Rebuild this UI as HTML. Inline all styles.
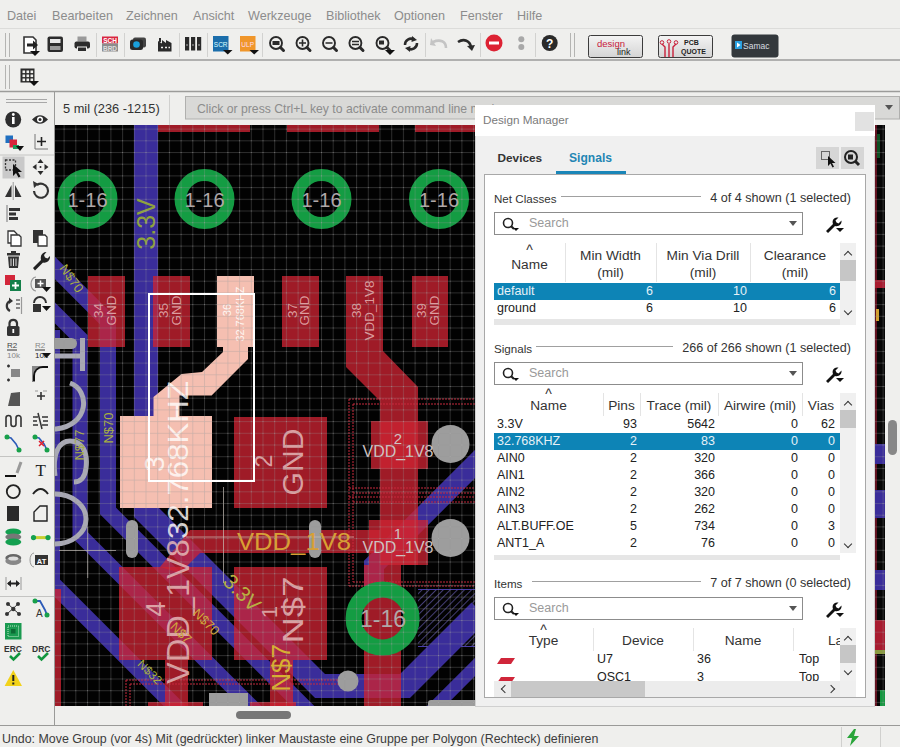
<!DOCTYPE html>
<html><head><meta charset="utf-8">
<style>
*{margin:0;padding:0;box-sizing:border-box}
html,body{width:900px;height:747px;overflow:hidden;background:#efefed;font-family:"Liberation Sans",sans-serif;color:#333}
.a{position:absolute}
.menu span{position:absolute;top:9px;font-size:12.6px;color:#8c8c8c}
.hl{position:absolute;height:1px;background:#bdbdbb}
.vl{position:absolute;width:1px;background:#cfcfcd}
#dlg{position:absolute;left:474px;top:104px;width:401px;height:603px;background:#efefef;border:1px solid #c8c8c8}
.t{font-size:12.6px;color:#333;white-space:nowrap;line-height:15px}
.sb{position:absolute;background:#fff;border:1px solid #8c8c8c}
.ph{position:absolute;font-size:12.5px;color:#9a9a9a}
.row{position:absolute;left:0;height:17px;font-size:12.5px;color:#222;white-space:nowrap}
.row span{position:absolute;top:1px}
.sel{background:#0d84b6;color:#e6f1f6}
.hd{position:absolute;font-size:13.7px;color:#333;text-align:center;line-height:17px;white-space:nowrap}
.arr{position:absolute;width:8px;height:8px}
.arr:before{content:"";position:absolute;left:1px;top:1px;width:5px;height:5px;border-left:1.6px solid #333;border-top:1.6px solid #333}
.up:before{transform:translate(0,2px) rotate(45deg)}
.dn:before{transform:translate(0,-1px) rotate(225deg)}
.lf:before{transform:translate(2px,0) rotate(-45deg)}
.rt:before{transform:translate(-1px,0) rotate(135deg)}
</style></head><body>
<!-- menu -->
<div class="menu">
<span style="left:7px">Datei</span>
<span style="left:52px">Bearbeiten</span>
<span style="left:126px">Zeichnen</span>
<span style="left:193px">Ansicht</span>
<span style="left:248px">Werkzeuge</span>
<span style="left:326px">Bibliothek</span>
<span style="left:394px">Optionen</span>
<span style="left:460px">Fenster</span>
<span style="left:517px">Hilfe</span>
</div>
<svg class="a" style="left:0;top:0" width="900" height="125" viewBox="0 0 900 125">
<path d="M0,28.5 H900" stroke="#dcdcda" stroke-width="1"/>
<path d="M0,60 H900 M0,91.5 H900" stroke="#9c9c9a" stroke-width="1.4"/>
<!-- grips -->
<path d="M5.5,33 V57 M9.5,33 V57 M5.5,65 V89 M9.5,65 V89 M570.5,33 V57 M574.5,33 V57" stroke="#b4b4b2" stroke-width="1"/>
<!-- separators -->
<path d="M96.5,33 V57 M124.5,33 V57 M179.5,33 V57 M207.5,33 V57 M262.5,33 V57 M425.5,33 V57 M480.5,33 V57 M535.5,33 V57" stroke="#d2d2d0" stroke-width="1"/>
<!-- export -->
<path d="M24,37 H33 L36,40 V53 H24 Z" fill="#fff" stroke="#333" stroke-width="1.6"/>
<path d="M27,43.5 H33 V40.5 L38,45 L33,49.5 V46.5 H27 Z" fill="#222"/>
<path d="M30,51 H40 L35,56 Z" fill="#111"/>
<!-- save -->
<rect x="47.5" y="36.5" width="15.5" height="15.5" rx="2" fill="#2c2c2c"/>
<rect x="50" y="39" width="10.5" height="4" fill="#e8e8e8"/><rect x="50" y="46" width="10.5" height="4" fill="#9a9a9a"/>
<!-- print -->
<rect x="77.5" y="36.5" width="9" height="5" fill="#9a9a9a"/>
<rect x="74.5" y="41.5" width="15.5" height="7" rx="2" fill="#2c2c2c"/>
<rect x="77.5" y="47" width="9" height="4.5" fill="#2c2c2c" stroke="#efefed" stroke-width="1"/>
<!-- SCH BRD -->
<rect x="102" y="36.5" width="16" height="7" fill="#d92640"/><rect x="102" y="43.5" width="16" height="8" fill="#8c8c8c"/>
<text x="110" y="42.8" font-family="Liberation Sans" font-size="6.5" font-weight="bold" fill="#fff" text-anchor="middle">SCH</text>
<text x="110" y="50.5" font-family="Liberation Sans" font-size="6.5" font-weight="bold" fill="#ddd" text-anchor="middle">BRD</text>
<!-- camera -->
<rect x="133" y="37.5" width="13" height="10" rx="2" fill="#444"/>
<rect x="130" y="39.5" width="13" height="10.5" rx="2.5" fill="#2a2a2a"/><circle cx="136.5" cy="44.5" r="3.3" fill="#1aa0dc"/>
<!-- factory -->
<path d="M158,51.5 V41 L162,43.5 V40 L166,43 V40 L171.5,43 V51.5 Z" fill="#2a2a2a"/><rect x="159" y="38" width="2" height="4" fill="#2a2a2a"/>
<path d="M161,47.5 H163 M165,47.5 H167 M168.5,47.5 H170" stroke="#efefed" stroke-width="1.5"/>
<!-- library -->
<rect x="185" y="37" width="4.2" height="13.5" fill="#2a2a2a"/><rect x="191" y="37" width="4.2" height="13.5" fill="#2a2a2a"/><rect x="197" y="37" width="4.2" height="13.5" fill="#2a2a2a"/>
<path d="M186,45 H188 M192,45 H194 M198,45 H200" stroke="#aaa" stroke-width="1"/>
<!-- SCR ULP -->
<rect x="213" y="36" width="15.5" height="15.5" fill="#1b6eab"/><text x="220.7" y="46.5" font-family="Liberation Sans" font-size="6.5" fill="#dff" text-anchor="middle">SCR</text>
<path d="M223,50 H232.5 L227.7,54.5 Z" fill="#111"/>
<rect x="240" y="36" width="15.5" height="15.5" fill="#f0962a"/><text x="247.7" y="46.5" font-family="Liberation Sans" font-size="6.5" fill="#fde" text-anchor="middle">ULP</text>
<path d="M249.5,50 H259 L254.2,54.5 Z" fill="#111"/>
<!-- zooms -->
<g fill="none" stroke="#2a2a2a" stroke-width="1.9">
<circle cx="276" cy="43" r="6"/><circle cx="302.5" cy="43" r="6"/><circle cx="329" cy="43" r="6"/><circle cx="355.4" cy="43" r="6"/><circle cx="382.5" cy="43" r="6"/>
</g>
<g stroke="#2a2a2a" stroke-width="3" stroke-linecap="round">
<path d="M280.5,47.5 L283.5,50.5 M307,47.5 L310,50.5 M333.5,47.5 L336.5,50.5 M360,47.5 L363,50.5 M387,47.5 L390,50.5"/>
</g>
<rect x="272.5" y="41" width="7" height="4" fill="#2a2a2a"/>
<path d="M299,43 H306 M302.5,39.5 V46.5 M325.5,43 H332.5 M352,41.5 H359 M352,44.5 H359" stroke="#2a2a2a" stroke-width="1.6"/>
<rect x="379" y="40.5" width="5" height="4" fill="#2a2a2a"/>
<path d="M385,50 H395 L390,55 Z" fill="#111"/>
<path d="M405,45 A6,6 0 0 1 414,39.5 M417,43 A6,6 0 0 1 408,48.5" fill="none" stroke="#2a2a2a" stroke-width="2.5"/>
<path d="M412,36 L417,40 L411.5,42 Z M410,52 L405,48 L410.5,46 Z" fill="#2a2a2a"/>
<!-- undo redo -->
<path d="M446,48 C446,41 440,39 433,42" fill="none" stroke="#c4c4c4" stroke-width="2.6"/><path d="M431,38 L436,46 L430,45 Z" fill="#c4c4c4"/>
<path d="M458,42 C464,38 470,41 471,47" fill="none" stroke="#2a2a2a" stroke-width="2.6"/><path d="M467,46 L475,45 L472,51 Z" fill="#2a2a2a"/>
<!-- stop / go -->
<circle cx="494" cy="43" r="8.5" fill="#dd2233"/><rect x="489" y="41.5" width="10" height="3" fill="#fff"/>
<circle cx="521.3" cy="39.3" r="3" fill="#a8a8a8"/><circle cx="521.3" cy="47" r="3" fill="#a8a8a8"/>
<!-- help -->
<circle cx="549.7" cy="43" r="8" fill="#2a2a2a"/>
<text x="549.7" y="47.5" font-family="Liberation Sans" font-size="12" font-weight="bold" fill="#fff" text-anchor="middle">?</text>
<!-- buttons -->
<defs><linearGradient id="bg" x1="0" y1="0" x2="0" y2="1"><stop offset="0" stop-color="#f4f4f4"/><stop offset="1" stop-color="#d4d4d4"/></linearGradient></defs>
<rect x="588.5" y="35.5" width="54" height="22" rx="2" fill="url(#bg)" stroke="#3c3c3c" stroke-width="1"/>
<text x="597" y="47" font-family="Liberation Sans" font-size="9.5" fill="#c8203a">design</text>
<text x="617" y="55" font-family="Liberation Sans" font-size="9" fill="#222">link</text>
<rect x="658.5" y="35.5" width="54" height="22" rx="2" fill="url(#bg)" stroke="#3c3c3c" stroke-width="1"/>
<path d="M665,57 V47 L662,44 M669,57 V44 M673,57 V47 L676,44" fill="none" stroke="#c8203a" stroke-width="1.4"/>
<circle cx="662" cy="42.5" r="1.8" fill="none" stroke="#c8203a"/><circle cx="669" cy="41.5" r="1.8" fill="none" stroke="#c8203a"/><circle cx="676" cy="42.5" r="1.8" fill="none" stroke="#c8203a"/>
<text x="684" y="45" font-family="Liberation Sans" font-size="7" font-weight="bold" fill="#222">PCB</text>
<text x="681" y="54" font-family="Liberation Sans" font-size="7" font-weight="bold" fill="#222">QUOTE</text>
<rect x="731.5" y="34.5" width="47" height="23" rx="3" fill="#33383c"/>
<rect x="735" y="41" width="7" height="8" fill="#2aa0e0"/><path d="M737,42.5 L740.5,45 L737,47.5 Z" fill="#fff"/>
<text x="743" y="48.5" font-family="Liberation Sans" font-size="8.5" fill="#d8dde0">Samac</text>
<!-- grid -->
<g fill="#2a2a2a"><rect x="20.5" y="68.5" width="14" height="14"/></g>
<g fill="#efefed"><rect x="22.5" y="70.5" width="2.6" height="2.6"/><rect x="26.5" y="70.5" width="2.6" height="2.6"/><rect x="30.5" y="70.5" width="2.6" height="2.6"/>
<rect x="22.5" y="74.5" width="2.6" height="2.6"/><rect x="26.5" y="74.5" width="2.6" height="2.6"/><rect x="30.5" y="74.5" width="2.6" height="2.6"/>
<rect x="22.5" y="78.5" width="2.6" height="2.6"/><rect x="26.5" y="78.5" width="2.6" height="2.6"/><rect x="30.5" y="78.5" width="2.6" height="2.6"/></g>
<path d="M29,81 H39 L34,86 Z" fill="#111"/>
<!-- command row -->
<path d="M169.5,95 V125" stroke="#d0d0ce" stroke-width="1"/>
<rect x="185.5" y="96.5" width="714" height="22.5" fill="#d9d9d7" stroke="#b0b0ae" stroke-width="1"/>
<path d="M885,105 H893 L889,110 Z" fill="#555"/>
<text x="63" y="113" font-family="Liberation Sans" font-size="12.8" fill="#333">5 mil (236 -1215)</text>
<text x="197" y="113" font-family="Liberation Sans" font-size="12.2" fill="#8c8c8c">Click or press Ctrl+L key to activate command line mode</text>
</svg>

<svg class="a" style="left:0;top:92px" width="54" height="614" viewBox="0 92 54 614">
<g stroke="#a8a8a8" stroke-width="1"><path d="M6,99.5 H47 M6,102.5 H47"/></g>
<path d="M0,155 H54 M0,456.5 H54 M0,596.5 H54" stroke="#c4c4c2" stroke-width="1"/>
<!-- info / eye -->
<circle cx="13.2" cy="119.5" r="8" fill="#2e2e2e"/>
<rect x="12" y="117" width="2.6" height="7" fill="#fff"/><circle cx="13.3" cy="114.5" r="1.4" fill="#fff"/>
<path d="M32,119.5 Q40,111 48,119.5 Q40,128 32,119.5 Z" fill="#2e2e2e"/><circle cx="40" cy="119.5" r="3" fill="#fff"/><circle cx="40" cy="119.5" r="1.5" fill="#2e2e2e"/>
<!-- layers / coord -->
<rect x="5.5" y="135.5" width="7.5" height="7.5" fill="#1f6fc0"/>
<rect x="9.5" y="139.5" width="7.5" height="8" fill="#d8283c"/>
<rect x="13" y="145" width="6" height="4" fill="#1e9a5a"/>
<path d="M16,146 H24 L20,151 Z" fill="#111"/>
<path d="M35,134 V149 H48" stroke="#777" stroke-width="1" fill="none"/><path d="M37,141.5 H46 M41.5,137 V146" stroke="#222" stroke-width="1.6"/>
<!-- select / move -->
<rect x="2.5" y="156.5" width="22" height="22" fill="#c9c9c9"/>
<rect x="5.5" y="160" width="10" height="10" fill="none" stroke="#333" stroke-width="1.3" stroke-dasharray="2 1.5"/>
<path d="M13,164 L13,176 L16,173 L18.5,177.5 L20.5,176.5 L18,172 L22,172 Z" fill="#111"/>
<path d="M40.5,159 L43.5,163 H37.5 Z M40.5,175 L43.5,171 H37.5 Z M32.5,167 L36.5,164 V170 Z M48.5,167 L44.5,164 V170 Z" fill="#2a2a2a"/>
<circle cx="40.5" cy="167" r="1" fill="#2a2a2a"/>
<!-- mirror / rotate -->
<path d="M11.5,185 L5,197 H11.5 Z M15,185 L21.5,197 H15 Z" fill="#333"/><path d="M13.2,182 V200" stroke="#999" stroke-width="1"/>
<path d="M34,191 A7,7 0 1 0 37,185" fill="none" stroke="#333" stroke-width="2.2"/><path d="M33,181 L38.5,184 L34,188 Z" fill="#333"/>
<!-- align -->
<path d="M7,205 V222" stroke="#999" stroke-width="1.4"/><rect x="9" y="208" width="11" height="3" fill="#333"/><rect x="9" y="212.5" width="7" height="3" fill="#333"/><rect x="9" y="217" width="9" height="3" fill="#333"/>
<!-- copy / paste -->
<path d="M8,231 H14 L17,234 V243 H8 Z" fill="#fff" stroke="#333" stroke-width="1.3"/><path d="M11,235 H19 L21,237 V246 H11 Z" fill="#fff" stroke="#333" stroke-width="1.3"/>
<rect x="33" y="230" width="10" height="13" fill="#333"/><path d="M38,235 H45 L47,237 V246 H38 Z" fill="#fff" stroke="#333" stroke-width="1.3"/>
<!-- delete / wrench -->
<rect x="7" y="253" width="13" height="2.5" fill="#333"/><rect x="11" y="251" width="5" height="2" fill="#333"/><path d="M8,256.5 H19 L18,268 H9 Z" fill="#333"/><path d="M11,258.5 V266 M13.5,258.5 V266 M16,258.5 V266" stroke="#ddd" stroke-width="1"/>
<path d="M33,268 L41,260 C40,256 42,252 46.5,252 L44,255 L45,257.5 L47.5,258.5 L50,256 C50.5,261 46,263.5 43,262.5 L35,270.5 Z" fill="#222"/>
<!-- add / replace -->
<rect x="5" y="275" width="10" height="10" fill="#d3263a"/><rect x="10" y="280" width="11" height="11" fill="#14804a"/><path d="M15.5,282 V289 M12,285.5 H19" stroke="#fff" stroke-width="1.8"/>
<path d="M36,277 A5,7 0 0 0 36,291" fill="none" stroke="#999" stroke-width="1.2"/><rect x="35" y="279" width="11" height="9" fill="#555"/><path d="M40.5,280.5 V286.5 M37.5,283.5 H43.5" stroke="#fff" stroke-width="1.5"/><path d="M42,287 H51 L46.5,292 Z" fill="#111"/>
<!-- change / optimize -->
<path d="M10,301 A5.5,5.5 0 0 0 10,311" fill="none" stroke="#333" stroke-width="2.2"/><path d="M9,297.5 L13,301 L9,304 Z" fill="#333"/><path d="M16,300 H20 M16,304 H20 M16,308 H20" stroke="#666" stroke-width="1.5"/><path d="M21.5,297 V314" stroke="#999" stroke-width="1.2"/>
<path d="M34,303 A6,6 0 0 1 46,303" fill="none" stroke="#333" stroke-width="2"/><rect x="33" y="304" width="8" height="8" fill="#333"/><path d="M42,306 H51 L46.5,311 Z" fill="#111"/>
<!-- lock -->
<path d="M9.5,326 V323 A3.8,3.8 0 0 1 17,323 V326" fill="none" stroke="#333" stroke-width="2.2"/><rect x="7" y="326" width="12.5" height="10" rx="1.5" fill="#333"/><rect x="12.4" y="329" width="1.8" height="4" fill="#fff"/>
<!-- R2 10k -->
<g font-family="Liberation Sans" font-size="8" fill="#444"><text x="7" y="348">R2</text><text x="7" y="358" fill="#888">10k</text><text x="35" y="348" fill="#888">R2</text><text x="35" y="358" fill="#222">10k</text></g>
<path d="M7,350 H17 M35,350 H45" stroke="#333" stroke-width="1"/><path d="M42,353 H51 L46.5,358 Z" fill="#111"/>
<!-- split / miter -->
<path d="M7,366 H10 M8.5,364.5 V367.5 M7,380 H10 M8.5,378.5 V381.5" stroke="#333" stroke-width="1.4"/><rect x="11" y="369" width="9" height="8" fill="#888"/>
<rect x="32" y="366" width="16" height="16" fill="#888"/><path d="M34,381 V376 A9,9 0 0 1 43,367 H48" fill="none" stroke="#111" stroke-width="2"/><path d="M35,382 V376 A8,8 0 0 1 43,368 H48 V382 Z" fill="#efefed"/>
<!-- slant / + -->
<path d="M8,406 L11,393 L20,392 V406 Z" fill="#555"/>
<path d="M37,396 H45 M41,392 V400" stroke="#333" stroke-width="1.6"/><path d="M35,391 H38 M43,391 H47" stroke="#999" stroke-width="1"/>
<!-- meander / ripup -->
<path d="M6,427 V418 A2.5,2.5 0 0 1 11,418 V424 A2.5,2.5 0 0 0 16,424 V418 A2.5,2.5 0 0 1 21,418 V427" fill="none" stroke="#333" stroke-width="1.6"/>
<path d="M33,417 H38 M33,421 H37 M33,425 H38 M42,417 H48 M43,421 H48 M42,425 H48 M38,413 L42,429" stroke="#333" stroke-width="1.5"/>
<!-- route / unroute -->
<path d="M6,437 L11,438 L16,444 L19,450" fill="none" stroke="#2c5bb8" stroke-width="1.6"/><circle cx="7" cy="437" r="2.5" fill="#18a04a"/><circle cx="19" cy="450" r="2.5" fill="#18a04a"/>
<path d="M34,437 L39,438 L44,444 L47,450" fill="none" stroke="#2c5bb8" stroke-width="1.6"/><circle cx="35" cy="437" r="2.5" fill="#18a04a"/><circle cx="47" cy="450" r="2.5" fill="#18a04a"/><path d="M39,441 L44,446 M44,441 L39,446" stroke="#e02030" stroke-width="1.5"/>
<!-- line / T -->
<path d="M5,476 H16" stroke="#111" stroke-width="2"/><path d="M17,473 L21,462" stroke="#999" stroke-width="3"/>
<text x="40.7" y="476" font-family="Liberation Serif" font-size="17" text-anchor="middle" fill="#222">T</text>
<!-- circle / arc -->
<circle cx="13.3" cy="491.6" r="6.5" fill="none" stroke="#222" stroke-width="1.8"/>
<path d="M33,494 Q40.7,484 48,494" fill="none" stroke="#222" stroke-width="2"/>
<!-- rect / polygon -->
<rect x="7" y="506" width="12" height="15" fill="#2a2a2a"/>
<path d="M34,521 V512 L40,506 H47 V521 Z" fill="none" stroke="#222" stroke-width="1.4"/>
<!-- via / signal -->
<ellipse cx="13.3" cy="532" rx="8" ry="3.5" fill="#14a050"/><ellipse cx="13.3" cy="537" rx="8" ry="3.5" fill="#777"/><ellipse cx="13.3" cy="542" rx="8" ry="3.5" fill="#14a050"/>
<path d="M33,537.6 H48" stroke="#c8d030" stroke-width="3"/><circle cx="33.5" cy="537.6" r="2.6" fill="#14a050"/><circle cx="48" cy="537.6" r="2.6" fill="#14a050"/>
<!-- hole / attribute -->
<ellipse cx="13.3" cy="558" rx="8" ry="4" fill="#666"/><ellipse cx="13.3" cy="561" rx="8" ry="4" fill="#888"/><ellipse cx="13.3" cy="558.5" rx="5" ry="2" fill="#ddd"/>
<path d="M34,553 A4,7 0 0 0 34,567" fill="none" stroke="#999" stroke-width="1"/><rect x="35" y="555" width="13" height="10" fill="#333"/><text x="41.5" y="563.5" font-family="Liberation Sans" font-size="7.5" font-weight="bold" text-anchor="middle" fill="#fff">AT</text>
<!-- dimension -->
<path d="M6,577 V590 M21,577 V590" stroke="#999" stroke-width="1"/><path d="M8,583.5 H19" stroke="#222" stroke-width="2"/><path d="M7,583.5 L11,580 V587 Z M20,583.5 L16,580 V587 Z" fill="#222"/>
<!-- ratsnest / autorouter -->
<g fill="#333"><circle cx="8" cy="604" r="2"/><circle cx="18" cy="604" r="2"/><circle cx="13.3" cy="609" r="2.2"/><circle cx="7" cy="614" r="2"/><circle cx="19" cy="614" r="2"/></g>
<path d="M8,604 L19,614 M18,604 L7,614" stroke="#333" stroke-width="1"/>
<path d="M35,601 L40,601 L45,610 L47,615" fill="none" stroke="#2c5bb8" stroke-width="1.8"/><circle cx="35" cy="601" r="2.5" fill="#18a04a"/><circle cx="47" cy="615" r="2.5" fill="#18a04a"/>
<text x="36" y="617" font-family="Liberation Sans" font-size="10" fill="#333">A</text>
<!-- green chip -->
<rect x="5" y="623" width="16.5" height="16.5" fill="#1a9a50"/><rect x="8" y="626" width="10.5" height="10.5" fill="none" stroke="#bfe8c8" stroke-width="1" stroke-dasharray="1 1"/><rect x="11" y="629" width="4.5" height="4.5" fill="#0c6a34"/>
<!-- ERC / DRC -->
<g font-family="Liberation Sans" font-size="8.5" font-weight="bold" fill="#333"><text x="4" y="652">ERC</text><text x="32" y="652">DRC</text></g>
<path d="M10,656 L13.5,659.5 L20,653" fill="none" stroke="#12963e" stroke-width="2.6"/><path d="M38,656 L41.5,659.5 L48,653" fill="none" stroke="#12963e" stroke-width="2.6"/>
<!-- warning -->
<path d="M13.3,670 L22,686 H4.6 Z" fill="#f2d21a"/><rect x="12.3" y="675" width="2" height="6" fill="#222"/><rect x="12.3" y="682.5" width="2" height="2" fill="#222"/>
</svg>

<div class="a" style="left:54px;top:92px;width:1px;height:633px;background:#9a9a98"></div>
<svg class="a" style="left:0;top:0" width="900" height="747" viewBox="0 0 900 747" font-family="Liberation Sans">
<defs>
<clipPath id="cv"><rect x="55" y="125" width="830" height="581"/></clipPath>
<pattern id="grid" patternUnits="userSpaceOnUse" x="63.6" y="140.3" width="11.7" height="11.7">
<rect x="0" y="0" width="11.7" height="1" fill="#959595" fill-opacity="0.29"/>
<rect x="0" y="0" width="1" height="11.7" fill="#959595" fill-opacity="0.29"/>
<rect x="0" y="0" width="1" height="1" fill="#ccc" fill-opacity="0.3"/>
</pattern>
<pattern id="hatch" patternUnits="userSpaceOnUse" width="5" height="5" patternTransform="rotate(45)">
<rect x="0" y="0" width="1" height="5" fill="#6f66c0" fill-opacity="0.6"/>
</pattern>
</defs>
<g clip-path="url(#cv)">
<rect x="55" y="124" width="830" height="582" fill="#020202"/>
<rect x="418" y="589" width="60" height="58" fill="url(#hatch)"/>
<path d="M418,589.5 H480 M418,646.5 H480" stroke="#4a3fa8" stroke-width="1"/>
<!-- BLUE bottom layer -->
<g fill="none" stroke="#3a2d9a" stroke-linejoin="miter" stroke-linecap="butt">
<polyline points="146,124 146,512 320,686 405,686 480,611" stroke-width="24"/>
<polyline points="40,253 108,321 108,511 320,723" stroke-width="16"/>
<polyline points="40,298 80,338 80,535 260,715" stroke-width="15"/>
<polyline points="52,330 52,583 180,711" stroke-width="16"/>
<polyline points="374,590 374,565 485,454" stroke-width="20"/>
<polyline points="430,712 490,652" stroke-width="13"/>
</g>
<!-- RED top layer -->
<g fill="#cc2232" fill-opacity="0.78">
<rect x="158" y="124" width="92" height="8"/>
<rect x="287" y="124" width="92" height="8"/>
<rect x="415" y="124" width="70" height="8"/>
<rect x="88" y="276" width="37" height="71"/>
<rect x="153" y="276" width="37" height="71"/>
<rect x="282" y="276" width="37" height="71"/>
<path d="M346,276 H383 V351 L418,387 V565 H380 V401 L346,367 Z"/>
<rect x="412" y="276" width="36" height="71"/>
<rect x="234" y="417" width="93" height="91"/>
<rect x="234" y="567" width="93" height="93"/>
<rect x="119" y="567" width="93" height="93"/>
<rect x="371" y="421" width="57" height="48"/>
<rect x="369" y="520" width="59" height="45"/>
<path d="M190,530 H380 V553 H200 L180,573 L160,567 Z"/>
<rect x="364" y="565" width="37" height="141"/>
<rect x="165" y="660" width="23" height="46"/>
<rect x="270" y="660" width="23" height="46"/>
<rect x="148" y="702" width="55" height="4"/>
<rect x="250" y="702" width="46" height="4"/>
<rect x="55" y="589" width="6" height="117"/>
</g>
<!-- right strip -->
<rect x="875" y="124" width="10" height="582" fill="#060606"/>
<rect x="875" y="124" width="2" height="582" fill="#8a1a2e" fill-opacity="0.7"/>
<rect x="877" y="134" width="3" height="24" fill="#13983f" fill-opacity="0.5"/>
<rect x="875" y="280" width="10" height="8" fill="#a81b2f"/>
<rect x="876" y="309" width="3" height="12" fill="#d0a030"/>
<rect x="875" y="444" width="10" height="20" fill="#3a2d9a"/>
<rect x="875" y="490" width="10" height="28" fill="#3a2d9a"/>
<rect x="875" y="570" width="10" height="20" fill="#3a2d9a"/>
<rect x="875" y="620" width="10" height="30" fill="#a81b2f"/>
<rect x="875" y="650" width="10" height="4" fill="#8a9a40"/>
<rect x="880" y="690" width="5" height="16" fill="#13983f"/>
<!-- thin red outlines -->
<g fill="none" stroke="#c8283c" stroke-width="1" stroke-dasharray="2 1">
<path d="M349,399 H480 M353,404 H480 M349,399 V586 M353,404 V582 M349,488 H480 M353,493 H480 M349,497 H480 M353,502 H480 M349,586 H480 M353,582 H480"/>
<path d="M126,680 H340 M130,684 H340 M126,680 V706 M130,684 V706"/>
</g>
<!-- PINK selected -->
<g fill="#f5bfb1">
<path d="M217,276 H254 V347 H248 V359 L211.6,395.6 H179.5 V416 H153.5 V397 L181.5,374 L202,372 L223,352 V347 H217 Z"/>
<rect x="120" y="416" width="92" height="92"/>
</g>
<!-- green rings -->
<g fill="none" stroke="#149c43">
<circle cx="87.5" cy="199" r="24" stroke-width="12"/>
<circle cx="204.5" cy="199" r="24" stroke-width="12"/>
<circle cx="321.5" cy="199" r="24" stroke-width="12"/>
<circle cx="439" cy="199" r="24" stroke-width="12"/>
<circle cx="382.6" cy="618.5" r="29" stroke-width="16"/>
</g>
<!-- gray holes -->
<g fill="#9d9d9d">
<circle cx="450.5" cy="444" r="19"/>
<circle cx="450.5" cy="538" r="19"/>
<circle cx="348" cy="681" r="10.5"/>
<rect x="126" y="520" width="12" height="38" rx="6"/>
<rect x="309" y="520" width="12" height="38" rx="6"/>
<rect x="40" y="338" width="37" height="11" rx="5.5"/>
<rect x="209" y="693" width="39" height="14"/>
<rect x="428" y="700" width="50" height="8" rx="3"/>
</g>
<!-- thin airwires -->
<path d="M223.5,487 V583 M186,537 H354 M59,550.5 H116 M87.7,527 V578" stroke="#c8c0b8" stroke-width="1" stroke-opacity="0.7"/>
<!-- OSC1 silkscreen -->
<g fill="none" stroke="#a9a9b4" stroke-width="5">
<path d="M55,356 H85 M82.5,338 V371"/>
<path d="M70,383 C90,390 90,425 56,429 L48,429"/>
<path d="M55,476 C52,452 60,441 70,441 C82,441 88,452 86,468 C85,478 80,482 74,482"/>
<path d="M50,494 H55 A31,25 0 0 1 55,544 H50"/>
</g>
<!-- texts: ring labels -->
<g fill="#b0a8a8" text-anchor="middle">
<text x="87.5" y="206.5" font-size="20">1-16</text>
<text x="204.5" y="206.5" font-size="20">1-16</text>
<text x="321.5" y="206.5" font-size="20">1-16</text>
<text x="439" y="206.5" font-size="20">1-16</text>
<text x="383" y="627" font-size="23">1-16</text>
</g>
<text transform="translate(155,224) rotate(-90)" font-size="25" fill="#8fa33c" text-anchor="middle">3.3V</text>
<!-- pad labels -->
<g fill="#e8b6b6" fill-opacity="0.85" text-anchor="middle" font-size="13.5">
<text transform="translate(102.6,310.5) rotate(-90)">34</text><text transform="translate(116,310.5) rotate(-90)">GND</text>
<text transform="translate(167.6,310.5) rotate(-90)">35</text><text transform="translate(181,310.5) rotate(-90)">GND</text>
<text transform="translate(296.6,310.5) rotate(-90)">37</text><text transform="translate(309,310.5) rotate(-90)">GND</text>
<text transform="translate(361,310.5) rotate(-90)">38</text><text transform="translate(373.5,310.5) rotate(-90)">VDD_1V8</text>
<text transform="translate(426,310.5) rotate(-90)">39</text><text transform="translate(438.5,310.5) rotate(-90)">GND</text>
</g>
<g fill="#fff6f2" text-anchor="middle" font-size="11">
<text transform="translate(231,310) rotate(-90)">36</text><text transform="translate(243.5,314) rotate(-90)" textLength="55" lengthAdjust="spacingAndGlyphs">32.768KHZ</text>
</g>
<g fill="#e6b8b8" fill-opacity="0.85" text-anchor="middle">
<text transform="translate(272,461) rotate(-90)" font-size="23">2</text>
<text transform="translate(303,462) rotate(-90)" font-size="30" textLength="67" lengthAdjust="spacingAndGlyphs">GND</text>
<text transform="translate(276.5,612) rotate(-90)" font-size="22">1</text>
<text transform="translate(303,610) rotate(-90)" font-size="30" textLength="67" lengthAdjust="spacingAndGlyphs">N$7</text>
<text transform="translate(165,609) rotate(-90)" font-size="27">4</text>
<text transform="translate(189,611.5) rotate(-90)" font-size="31" textLength="145" lengthAdjust="spacingAndGlyphs">VDD_1V8</text>
</g>
<g fill="#fffaf8" fill-opacity="0.85" text-anchor="middle">
<text transform="translate(164,464) rotate(-90)" font-size="28">3</text>
<text transform="translate(188,460) rotate(-90)" font-size="30" textLength="158" lengthAdjust="spacingAndGlyphs">32.768KHZ</text>
</g>
<text x="294" y="550" font-size="23" fill="#d9a033" text-anchor="middle" textLength="114" lengthAdjust="spacingAndGlyphs">VDD_1V8</text>
<g fill="#cfc2c2" text-anchor="middle">
<text x="398" y="443.5" font-size="15">2</text><text x="398" y="457" font-size="16.5" textLength="71" lengthAdjust="spacingAndGlyphs">VDD_1V8</text>
<text x="398" y="539" font-size="15">1</text><text x="398" y="553" font-size="16.5" textLength="71" lengthAdjust="spacingAndGlyphs">VDD_1V8</text>
</g>
<text transform="translate(237,598) rotate(45)" font-size="21" fill="#b8b040" text-anchor="middle">3.3V</text>
<g fill="#a8b040" text-anchor="middle" font-size="13">
<text transform="translate(113,428) rotate(-90)">N$70</text>
<text transform="translate(84,445) rotate(-90)">N$77</text>
<text transform="translate(68,281) rotate(55)">N$70</text>
<text transform="translate(147,675) rotate(45)" font-size="12">N$32</text>
</g>
<g fill="#d0a838" text-anchor="middle" font-size="13">
<text transform="translate(203,625) rotate(45)">N$70</text>
<text transform="translate(178,636) rotate(45)">N$7</text>
</g>
<text transform="translate(289.5,668) rotate(-90)" font-size="26" fill="#d8b030" text-anchor="middle">N$7</text>
<rect x="55" y="124" width="830" height="582" fill="url(#grid)"/>
<rect x="149" y="294" width="105" height="187" fill="none" stroke="#fff" stroke-width="2"/>
</g>
<!-- bottom h-scroll of main view -->
<rect x="55" y="706" width="845" height="19" fill="#efefed"/>
<rect x="236" y="711" width="55" height="8" rx="4" fill="#777"/>
<!-- right v-scroll -->
<rect x="885" y="124" width="15" height="601" fill="#efefed"/>
<rect x="888" y="420" width="9" height="35" rx="4.5" fill="#888"/>
</svg>

<!-- dialog -->
<div class="a" style="left:475px;top:105px;width:400px;height:602px;background:#f0f0f0;border:1px solid #d0d0d0;border-top:none"></div>
<div class="a" style="left:475px;top:105px;width:400px;height:31px;background:#fff"></div>
<div class="a" style="left:483px;top:113px;font-size:11.7px;color:#7a7a7a">Design Manager</div>
<div class="a" style="left:855px;top:112px;width:19px;height:19px;background:#e2e2e2"></div>
<div class="a" style="left:497.5px;top:151px;font-size:11.8px;font-weight:bold;color:#333">Devices</div>
<div class="a" style="left:569px;top:151px;font-size:12.1px;font-weight:bold;color:#1f86b4">Signals</div>
<div class="a" style="left:556px;top:171px;width:70px;height:3px;background:#1a86b8"></div>
<div class="a" style="left:816px;top:147px;width:23px;height:22px;background:#d6d6d6"></div>
<div class="a" style="left:841px;top:147px;width:23px;height:22px;background:#d6d6d6"></div>
<svg class="a" style="left:816px;top:147px" width="48" height="22" viewBox="0 0 48 22">
<rect x="5.5" y="4.5" width="8" height="8" fill="none" stroke="#666" stroke-width="1"/>
<path d="M12,9 L12,19 L14.5,16.5 L16.5,20.5 L18,19.8 L16,16 L19.5,16 Z" fill="#111"/>
<circle cx="35" cy="10" r="6" fill="none" stroke="#222" stroke-width="2"/>
<rect x="32" y="7.5" width="5" height="5" fill="#222"/>
<path d="M39,14 L43,18" stroke="#222" stroke-width="3"/>
</svg>
<!-- frame -->
<div class="a" style="left:484px;top:174px;width:382px;height:524px;background:#fff;border:1px solid #a8a8a8"></div>

<!-- NET CLASSES -->
<div class="a t" style="left:494px;top:191px;font-size:11.6px">Net Classes</div>
<div class="a" style="left:561px;top:196px;width:140px;height:1px;background:#a0a0a0"></div>
<div class="a t" style="left:700px;top:191px;width:151px;text-align:right">4 of 4 shown (1 selected)</div>
<div class="sb" style="left:494px;top:212px;width:309px;height:23px"></div>
<div class="ph" style="left:529px;top:216px">Search</div>
<div class="a" style="left:789px;top:221px;width:0;height:0;border-left:4px solid transparent;border-right:4px solid transparent;border-top:5px solid #555"></div>
<!-- table -->
<div class="a" style="left:494px;top:242px;width:346px;height:41px;background:#fff"></div>
<div class="hd" style="left:494px;top:243px;width:71px;font-size:14px;line-height:14px">^</div>
<div class="hd" style="left:494px;top:256px;width:71px">Name</div>
<div class="hd" style="left:565px;top:247px;width:91px">Min Width<br>(mil)</div>
<div class="hd" style="left:656px;top:247px;width:94px">Min Via Drill<br>(mil)</div>
<div class="hd" style="left:750px;top:247px;width:90px">Clearance<br>(mil)</div>
<div class="a" style="left:565px;top:243px;width:1px;height:39px;background:#e4e4e4"></div>
<div class="a" style="left:656px;top:243px;width:1px;height:39px;background:#e4e4e4"></div>
<div class="a" style="left:750px;top:243px;width:1px;height:39px;background:#e4e4e4"></div>
<div class="row sel" style="left:494px;top:283px;width:346px"><span style="left:3px">default</span><span style="right:187px">6</span><span style="right:93px">10</span><span style="right:4px">6</span></div>
<div class="row" style="left:494px;top:300px;width:346px"><span style="left:3px">ground</span><span style="right:187px">6</span><span style="right:93px">10</span><span style="right:4px">6</span></div>
<div class="a" style="left:494px;top:319px;width:346px;height:6px;background:#e6e6e6"></div>
<div class="a" style="left:840px;top:243px;width:16px;height:82px;background:#f0f0f0"></div>
<div class="a" style="left:840px;top:260px;width:16px;height:21px;background:#c6c6c6"></div>
<div class="arr up" style="left:844px;top:249px"></div>
<div class="arr dn" style="left:844px;top:308px"></div>

<!-- SIGNALS -->
<div class="a t" style="left:494px;top:341px;font-size:11.6px">Signals</div>
<div class="a" style="left:536px;top:346px;width:137px;height:1px;background:#a0a0a0"></div>
<div class="a t" style="left:670px;top:341px;width:181px;text-align:right">266 of 266 shown (1 selected)</div>
<div class="sb" style="left:494px;top:362px;width:309px;height:23px"></div>
<div class="ph" style="left:529px;top:366px">Search</div>
<div class="a" style="left:789px;top:371px;width:0;height:0;border-left:4px solid transparent;border-right:4px solid transparent;border-top:5px solid #555"></div>
<div class="hd" style="left:494px;top:387px;width:109px;font-size:14px;line-height:14px">^</div>
<div class="hd" style="left:494px;top:397px;width:109px">Name</div>
<div class="hd" style="left:603px;top:397px;width:37px">Pins</div>
<div class="hd" style="left:640px;top:397px;width:78px">Trace (mil)</div>
<div class="hd" style="left:718px;top:397px;width:84px">Airwire (mil)</div>
<div class="hd" style="left:802px;top:397px;width:38px">Vias</div>
<div class="a" style="left:603px;top:393px;width:1px;height:23px;background:#e4e4e4"></div>
<div class="a" style="left:640px;top:393px;width:1px;height:23px;background:#e4e4e4"></div>
<div class="a" style="left:718px;top:393px;width:1px;height:23px;background:#e4e4e4"></div>
<div class="a" style="left:802px;top:393px;width:1px;height:23px;background:#e4e4e4"></div>
<div class="row" style="left:494px;top:416px;width:346px"><span style="left:3px">3.3V</span><span style="right:203px">93</span><span style="right:125px">5642</span><span style="right:42px">0</span><span style="right:5px">62</span></div>
<div class="row sel" style="left:494px;top:433px;width:346px"><span style="left:3px">32.768KHZ</span><span style="right:203px">2</span><span style="right:125px">83</span><span style="right:42px">0</span><span style="right:5px">0</span></div>
<div class="row" style="left:494px;top:450px;width:346px"><span style="left:3px">AIN0</span><span style="right:203px">2</span><span style="right:125px">320</span><span style="right:42px">0</span><span style="right:5px">0</span></div>
<div class="row" style="left:494px;top:467px;width:346px"><span style="left:3px">AIN1</span><span style="right:203px">2</span><span style="right:125px">366</span><span style="right:42px">0</span><span style="right:5px">0</span></div>
<div class="row" style="left:494px;top:484px;width:346px"><span style="left:3px">AIN2</span><span style="right:203px">2</span><span style="right:125px">320</span><span style="right:42px">0</span><span style="right:5px">0</span></div>
<div class="row" style="left:494px;top:501px;width:346px"><span style="left:3px">AIN3</span><span style="right:203px">2</span><span style="right:125px">262</span><span style="right:42px">0</span><span style="right:5px">0</span></div>
<div class="row" style="left:494px;top:518px;width:346px"><span style="left:3px">ALT.BUFF.OE</span><span style="right:203px">5</span><span style="right:125px">734</span><span style="right:42px">0</span><span style="right:5px">3</span></div>
<div class="row" style="left:494px;top:535px;width:346px"><span style="left:3px">ANT1_A</span><span style="right:203px">2</span><span style="right:125px">76</span><span style="right:42px">0</span><span style="right:5px">0</span></div>
<div class="a" style="left:494px;top:555px;width:346px;height:5px;background:#e6e6e6"></div>
<div class="a" style="left:840px;top:393px;width:16px;height:160px;background:#f0f0f0"></div>
<div class="a" style="left:840px;top:410px;width:16px;height:18px;background:#c6c6c6"></div>
<div class="arr up" style="left:844px;top:399px"></div>
<div class="arr dn" style="left:844px;top:541px"></div>

<!-- ITEMS -->
<div class="a t" style="left:494px;top:576px;font-size:11.6px">Items</div>
<div class="a" style="left:532px;top:581px;width:169px;height:1px;background:#a0a0a0"></div>
<div class="a t" style="left:700px;top:576px;width:151px;text-align:right">7 of 7 shown (0 selected)</div>
<div class="sb" style="left:494px;top:597px;width:309px;height:23px"></div>
<div class="ph" style="left:529px;top:601px">Search</div>
<div class="a" style="left:789px;top:606px;width:0;height:0;border-left:4px solid transparent;border-right:4px solid transparent;border-top:5px solid #555"></div>
<div class="hd" style="left:494px;top:623px;width:99px;font-size:14px;line-height:14px">^</div>
<div class="hd" style="left:494px;top:632px;width:99px">Type</div>
<div class="hd" style="left:593px;top:632px;width:100px">Device</div>
<div class="hd" style="left:693px;top:632px;width:100px">Name</div>
<div class="a" style="left:593px;top:628px;width:1px;height:23px;background:#e4e4e4"></div>
<div class="a" style="left:693px;top:628px;width:1px;height:23px;background:#e4e4e4"></div>
<div class="a" style="left:793px;top:628px;width:1px;height:23px;background:#e4e4e4"></div>
<div class="a" style="left:828px;top:632px;width:12px;height:20px;overflow:hidden"><div class="hd" style="left:0;top:0;width:40px;text-align:left">La</div></div>
<div class="a" style="left:494px;top:651px;width:346px;height:30px;overflow:hidden">
 <svg class="a" style="left:3px;top:6px" width="18" height="8"><path d="M4,1 H18 L14,7 H0 Z" fill="#d0263a"/></svg>
 <svg class="a" style="left:3px;top:25px" width="18" height="8"><path d="M4,1 H18 L14,7 H0 Z" fill="#d0263a"/></svg>
 <span class="a" style="left:103px;top:1px;font-size:12.5px;color:#222">U7</span>
 <span class="a" style="left:203px;top:1px;font-size:12.5px;color:#222">36</span>
 <span class="a" style="left:305px;top:1px;font-size:12.5px;color:#222">Top</span>
 <span class="a" style="left:103px;top:19px;font-size:12.5px;color:#222">OSC1</span>
 <span class="a" style="left:203px;top:19px;font-size:12.5px;color:#222">3</span>
 <span class="a" style="left:305px;top:19px;font-size:12.5px;color:#222">Top</span>
</div>
<div class="a" style="left:494px;top:681px;width:346px;height:16px;background:#ececec"></div>
<div class="a" style="left:511px;top:681px;width:134px;height:16px;background:#c8c8c8"></div>
<div class="a" style="left:840px;top:681px;width:16px;height:16px;background:#efefef"></div>
<div class="arr lf" style="left:499px;top:685px"></div>
<div class="arr rt" style="left:828px;top:685px"></div>
<div class="a" style="left:840px;top:628px;width:16px;height:53px;background:#f0f0f0"></div>
<div class="a" style="left:840px;top:645px;width:16px;height:18px;background:#c6c6c6"></div>
<div class="arr up" style="left:844px;top:634px"></div>
<div class="arr dn" style="left:844px;top:668px"></div>
<!-- wrenches & search icons -->
<svg class="a" style="left:501px;top:217px" width="20" height="15" viewBox="0 0 20 15"><circle cx="7" cy="6" r="4.5" fill="none" stroke="#222" stroke-width="1.6"/><path d="M10,9 L13,12" stroke="#222" stroke-width="2.2"/><path d="M12,11 H18 L15,14 Z" fill="#111"/></svg>
<svg class="a" style="left:823px;top:216px" width="22" height="18" viewBox="0 0 22 18"><path d="M3,15 L10,8 C9,5 10,2 14,1.5 L15.5,1.5 L12.5,4.5 L13.5,6.5 L15.5,7.5 L18.5,4.5 C19,8 16,11 12,10 L5,17 Z" fill="#111"/><path d="M13,12 H21 L17,16 Z" fill="#111"/></svg>
<svg class="a" style="left:501px;top:367px" width="20" height="15" viewBox="0 0 20 15"><circle cx="7" cy="6" r="4.5" fill="none" stroke="#222" stroke-width="1.6"/><path d="M10,9 L13,12" stroke="#222" stroke-width="2.2"/><path d="M12,11 H18 L15,14 Z" fill="#111"/></svg>
<svg class="a" style="left:823px;top:366px" width="22" height="18" viewBox="0 0 22 18"><path d="M3,15 L10,8 C9,5 10,2 14,1.5 L15.5,1.5 L12.5,4.5 L13.5,6.5 L15.5,7.5 L18.5,4.5 C19,8 16,11 12,10 L5,17 Z" fill="#111"/><path d="M13,12 H21 L17,16 Z" fill="#111"/></svg>
<svg class="a" style="left:501px;top:602px" width="20" height="15" viewBox="0 0 20 15"><circle cx="7" cy="6" r="4.5" fill="none" stroke="#222" stroke-width="1.6"/><path d="M10,9 L13,12" stroke="#222" stroke-width="2.2"/><path d="M12,11 H18 L15,14 Z" fill="#111"/></svg>
<svg class="a" style="left:823px;top:601px" width="22" height="18" viewBox="0 0 22 18"><path d="M3,15 L10,8 C9,5 10,2 14,1.5 L15.5,1.5 L12.5,4.5 L13.5,6.5 L15.5,7.5 L18.5,4.5 C19,8 16,11 12,10 L5,17 Z" fill="#111"/><path d="M13,12 H21 L17,16 Z" fill="#111"/></svg>


<!-- status -->
<div class="hl" style="left:0;top:725px;width:900px;background:#9a9a98"></div>
<div class="a" style="left:2px;top:732px;font-size:12.4px;color:#3c3c3c;white-space:nowrap">Undo: Move Group (vor 4s) Mit (gedrückter) linker Maustaste eine Gruppe per Polygon (Rechteck) definieren</div>
<div class="a" style="left:841px;top:727px;width:1px;height:20px;background:#d0d0ce"></div>
<div class="a" style="left:880px;top:727px;width:1px;height:20px;background:#d0d0ce"></div>
<svg class="a" style="left:845px;top:729px" width="16" height="17" viewBox="0 0 16 17"><path d="M9,0 L2,9 H7 L5,17 L14,7 H9 L11,0 Z" fill="#2aa53a"/></svg>
</body></html>
